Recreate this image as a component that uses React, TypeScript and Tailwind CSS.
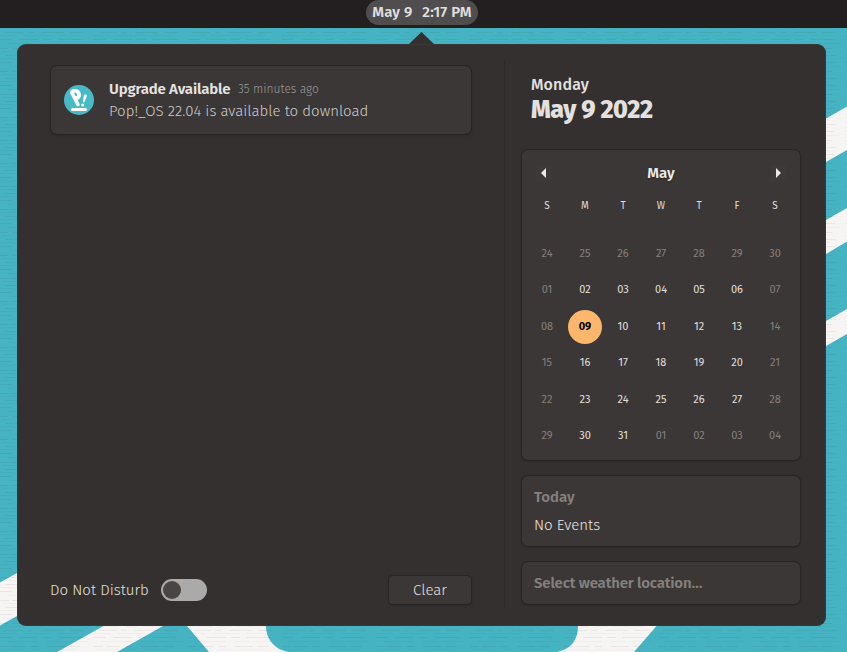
const weekdays = ['S', 'M', 'T', 'W', 'T', 'F', 'S'];

const weeks = [
  ['24', '25', '26', '27', '28', '29', '30'],
  ['01', '02', '03', '04', '05', '06', '07'],
  ['08', '09', '10', '11', '12', '13', '14'],
  ['15', '16', '17', '18', '19', '20', '21'],
  ['22', '23', '24', '25', '26', '27', '28'],
  ['29', '30', '31', '01', '02', '03', '04'],
];

const card =
  'rounded-md bg-[#3b3736] shadow-[0_0_0_1px_#282524,0_1px_3px_rgba(0,0,0,0.3)]';

function Wallpaper() {
  return (
    <svg className="absolute inset-0" width="847" height="652" aria-hidden="true">
      <defs>
        <pattern id="weave" width="94" height="23" patternUnits="userSpaceOnUse">
          <g fill="none" stroke="#303030" strokeWidth="1">
            <path opacity=".07" d="M0 2.5h9m3 0h14m5 0h7m9 0h18m4 0h11M5 9.5h18m4 0h6m8 0h23m6 0h14M0 16.5h12m7 0h19m5 0h9m6 0h25" />
            <path opacity=".04" d="M2 5.5h22m8 0h12m5 0h29M0 12.5h17m6 0h28m7 0h20M7 20.5h31m9 0h14m4 0h23" />
          </g>
        </pattern>
      </defs>
      <rect width="847" height="652" fill="#46b3c2" />
      <g fill="#f6f5f4">
        <path d="M0 582.5 17 573 110 520V562L17 616 0 625.5Z" />
        <path d="M103.500 626H163L117 652H57Z" />
        <path d="M187 626H266C266 639 275 650 289 652H209Z" />
        <path d="M578 626H656.500L634 652H557C571 649 578 640 578 626Z" />
        <path d="M826 118.500 847 106.500V150L826 162Z" />
        <path d="M826 220 847 208V241.500L826 254Z" />
        <path d="M826 321 847 309V334L826 346Z" />
      </g>
      <rect width="847" height="652" fill="url(#weave)" />
    </svg>
  );
}

function PopLogo() {
  return (
    <svg className="shrink-0" width="30" height="30" viewBox="0 0 30 30">
      <circle cx="15" cy="15" r="15" fill="#48b9c7" />
      <g fill="#fff">
        <path fillRule="evenodd" d="M6.300 8.500C5.300 5.800 7.800 4 10.800 4c3.800 0 6.200 2.500 6.200 5.800 0 2.700-1.300 4.600-3.400 4.900l2 4.500c.7 1.700-2 3.100-3.100 1.300L6.300 8.500Zm4.200-1c-.6.400.7 3.500 1.600 3.600 1 .2 1.300-1 .7-2.100-.5-1.100-1.500-1.900-2.300-1.500Z" />
        <path d="M20.700 9.500c1-.4 2.600.3 2.300 1.300l-2.500 6.200c-.3.800-1.500.5-1.500-.3l.8-6.200c0-.5.400-.8.900-1Z" />
        <circle cx="18.700" cy="20" r="1.500" />
        <rect x="7" y="22.900" width="16" height="3.200" rx="1.600" />
      </g>
    </svg>
  );
}

function Notifications() {
  return (
    <section className="flex w-[488px] flex-col border-r border-[#2b2827] pr-[33px] pl-[34px]">
      <article className={`mt-[5px] flex h-[68px] items-center pl-[13px] ${card}`}>
        <PopLogo />
        <div className="ml-[15px] flex flex-col">
          <div className="flex h-[22px] items-center">
            <h2 className="w-[129px] text-[15px] font-semibold tracking-[-0.17px] whitespace-nowrap text-[#e5e3e2]">Upgrade Available</h2>
            <time className="text-[12px] font-light text-[#9a9795]">35 minutes ago</time>
          </div>
          <p className="h-[22px] text-[15px] leading-[22px] font-light whitespace-nowrap text-[#cfccca]">Pop!_OS 22.04 is available to download</p>
        </div>
      </article>
      <footer className="mt-auto mb-[5px] flex h-[28px] items-center">
        <span className="-ml-px w-[111px] text-[15px] font-light text-[#e3e0de]">Do Not Disturb</span>
        <button aria-label="Do Not Disturb" className="flex h-[22px] w-[46px] items-center rounded-full bg-[#aaa] pl-[2px]">
          <span className="size-[18px] rounded-full bg-[#494542]" />
        </button>
        <button className="ml-auto h-[28px] w-[82px] rounded-sm bg-[#3b3736] text-[15px] font-light text-[#e3e0de] shadow-[0_0_0_1px_#282524,0_1px_3px_rgba(0,0,0,0.3)]">Clear</button>
      </footer>
    </section>
  );
}

function Calendar() {
  return (
    <section className={`mt-[25px] h-[310px] px-[6px] pt-[11px] ${card}`}>
      <header className="flex h-6 items-center justify-between px-[8px] text-[#eceae9]">
        <button aria-label="Previous month" className="flex size-4 items-center bg-[#3d3938] pl-[5px]">
          <svg width="5" height="10" viewBox="0 0 5 10"><path d="M5 0v10L0 5Z" fill="currentColor" /></svg>
        </button>
        <span className="text-[15px] font-semibold [text-shadow:0_1px_2px_#222]">May</span>
        <button aria-label="Next month" className="flex size-4 items-center bg-[#3d3938] pl-[6px]">
          <svg width="5" height="10" viewBox="0 0 5 10"><path d="M0 0v10L5 5Z" fill="currentColor" /></svg>
        </button>
      </header>
      <div className="mt-[13px] grid h-4 grid-cols-7 text-center text-[10px] leading-4 text-[#dedbd9]">
        {weekdays.map((d, i) => <span key={i}>{d}</span>)}
      </div>
      <div className="mt-[22px] grid auto-rows-[36.450px] grid-cols-7 text-[11px]">
        {weeks.map((week, r) =>
          week.map((day, c) => {
            const today = r === 2 && c === 1;
            const muted = c === 0 || c === 6 || r === 0 || (r === 5 && c > 2);
            return (
              <div key={`${r}-${c}`} className="flex items-center justify-center">
                <span className={today
                  ? 'flex size-[34px] shrink-0 items-center justify-center rounded-full bg-[#fdb76d] font-bold text-black'
                  : muted ? 'text-[#83807e]' : 'text-[#e2dfdd]'}>
                  {day}
                </span>
              </div>
            );
          }),
        )}
      </div>
    </section>
  );
}

export default function App() {
  return (
    <main className="relative h-[652px] w-[847px] overflow-hidden font-['Fira_Sans','Noto_Sans',sans-serif]">
      <Wallpaper />
      <div className="relative flex h-full flex-col">
        <header className="flex h-7 shrink-0 items-start bg-[#231f20] pl-[366px]">
          <button className="flex h-[25px] w-[112px] items-center justify-center gap-[10px] rounded-full bg-[#4f4d4e] text-[15px] font-semibold tracking-[0.13px] whitespace-nowrap text-[#dfddde]">
            <span>May 9</span><span>2:17 PM</span>
          </button>
        </header>
        <svg className="mt-1 ml-[409px] shrink-0" width="25" height="12"><path d="M0 12 12.500 0 25 12Z" fill="#33302f" /></svg>
        <div className="ml-[17px] flex h-[582px] w-[809px] rounded-[9px] bg-[#33302f] py-[17px] shadow-[inset_0_0_0_1px_rgba(65,65,64,0.5)]">
          <Notifications />
          <aside className="ml-[17px] w-[278px]">
            <div className="h-[64px] pt-[12px] pl-[9px] text-[#e3e1e0]">
              <p className="text-[16px] leading-[24px] font-medium tracking-[0.1px]">Monday</p>
              <p className="text-[25px] leading-[26px] font-extrabold tracking-[-0.42px] whitespace-nowrap">May 9 2022</p>
            </div>
            <Calendar />
            <section className={`mt-4 flex h-[70px] flex-col justify-center gap-[4px] pl-3 text-[15px] leading-6 ${card}`}>
              <h2 className="font-semibold text-[#83807e]">Today</h2>
              <p className="font-light text-[#ebe8e6]">No Events</p>
            </section>
            <section className={`mt-4 flex h-[42px] items-center pl-3 text-[15px] font-semibold tracking-[-0.17px] text-[#83807e] ${card}`}>
              Select weather location…
            </section>
          </aside>
        </div>
      </div>
    </main>
  );
}
